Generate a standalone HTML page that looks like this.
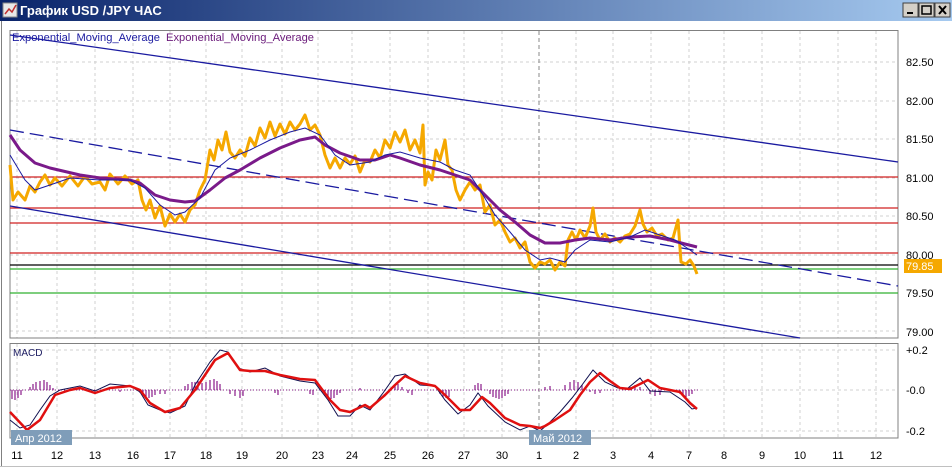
<!DOCTYPE html>
<html><head><meta charset="utf-8"><style>
body{margin:0;width:952px;height:470px;overflow:hidden;background:#fff;font-family:"Liberation Sans","DejaVu Sans",sans-serif;}
</style></head><body>
<svg width="952" height="470" xmlns="http://www.w3.org/2000/svg" style="position:absolute;left:0;top:0">
<defs>
<linearGradient id="tb" x1="0" x2="1" y1="0" y2="0"><stop offset="0" stop-color="#0a246a"/><stop offset="1" stop-color="#a6caf0"/></linearGradient>
</defs>
<rect x="0" y="0" width="952" height="21" fill="url(#tb)"/>
<rect x="3" y="3" width="14" height="14" fill="#e8e8e8" stroke="#888"/>
<path d="M5 14 L9 9 L12 12 L16 5" stroke="#c03030" fill="none" stroke-width="1.5"/>
<text x="20" y="15" fill="#fff" font-weight="bold" font-size="13" font-family="Liberation Sans, DejaVu Sans, sans-serif">График USD /JPY  ЧАС</text>
<g fill="#d4d0c8" stroke="#404040">
<rect x="903" y="3" width="15" height="14"/><rect x="919" y="3" width="15" height="14"/><rect x="935" y="3" width="15" height="14"/>
</g>
<rect x="907" y="12" width="6" height="2" fill="#000"/>
<rect x="922" y="6" width="9" height="8" fill="none" stroke="#000" stroke-width="1.5"/>
<path d="M939 6 L946 14 M946 6 L939 14" stroke="#000" stroke-width="2"/>
<line x1="1.5" y1="21" x2="1.5" y2="466" stroke="#808080"/>
<line x1="0" y1="466.5" x2="952" y2="466.5" stroke="#c0c0c0"/>
<!-- grid -->
<g stroke="#d0d0d0" stroke-dasharray="3,3">
<path d="M17 31V338M57 31V338M95 31V338M133 31V338M170 31V338M206 31V338M242 31V338M282 31V338M318 31V338M352 31V338M390 31V338M428 31V338M464 31V338M502 31V338M576 31V338M613 31V338M651 31V338M689 31V338M724 31V338M762 31V338M800 31V338M838 31V338M876 31V338"/>
<path d="M17 344V438M57 344V438M95 344V438M133 344V438M170 344V438M206 344V438M242 344V438M282 344V438M318 344V438M352 344V438M390 344V438M428 344V438M464 344V438M502 344V438M576 344V438M613 344V438M651 344V438M689 344V438M724 344V438M762 344V438M800 344V438M838 344V438M876 344V438"/>
<path d="M10 62H898M10 101H898M10 139H898M10 178H898M10 216H898M10 255H898M10 293H898M10 331H898"/>
<path d="M10 350H898M10 390H898M10 431H898"/>
</g>
<line x1="539" y1="31" x2="539" y2="438" stroke="#888" stroke-dasharray="4,3"/>
<rect x="10" y="30.5" width="888" height="307.5" fill="none" stroke="#808080"/>
<rect x="10" y="343.5" width="888" height="94.5" fill="none" stroke="#808080"/>
<!-- horizontal levels -->
<g stroke-width="1.2">
<line x1="10" y1="177" x2="898" y2="177" stroke="#d02020"/>
<line x1="10" y1="208" x2="898" y2="208" stroke="#d02020"/>
<line x1="10" y1="223" x2="898" y2="223" stroke="#d02020"/>
<line x1="10" y1="253" x2="898" y2="253" stroke="#d02020"/>
<line x1="10" y1="265" x2="898" y2="265" stroke="#000"/>
<line x1="10" y1="269" x2="898" y2="269" stroke="#30b030"/>
<line x1="10" y1="293" x2="898" y2="293" stroke="#30b030"/>
</g>
<!-- channel -->
<line x1="10" y1="35" x2="898" y2="162" stroke="#1a1aa0" stroke-width="1.3"/>
<line x1="10" y1="206" x2="800" y2="338" stroke="#1a1aa0" stroke-width="1.3"/>
<line x1="10" y1="130" x2="898" y2="286" stroke="#1a1aa0" stroke-width="1.3" stroke-dasharray="14,6"/>
<!-- price -->
<polyline fill="none" stroke="#f5a800" stroke-width="3" stroke-linejoin="round" points="10,165 13,200 18,192 25,200 30,186 35,192 40,182 45,175 50,185 55,178 62,186 70,176 78,186 85,176 92,184 100,182 105,190 110,174 118,184 125,176 132,184 138,180 142,200 146,210 150,200 155,218 160,206 165,226 170,214 175,222 180,214 185,222 190,210 195,205 200,190 205,180 210,150 214,160 218,140 222,150 226,132 230,152 235,158 240,150 245,156 250,138 255,146 260,128 265,138 270,122 275,136 280,124 285,134 290,122 295,130 300,124 305,115 310,130 315,125 320,135 325,155 330,168 335,158 340,168 345,158 350,164 355,156 360,172 365,160 370,162 375,150 380,158 385,140 390,148 395,132 400,142 405,130 410,150 415,140 420,153 423,125 425,185 428,172 432,180 436,150 440,160 445,140 448,165 452,170 456,190 460,200 465,190 470,182 475,190 480,185 485,212 490,205 495,225 500,220 505,232 510,242 515,238 520,248 525,242 530,262 535,268 540,262 545,264 550,260 555,270 560,262 565,266 568,240 572,232 576,240 580,230 585,238 590,226 593,208 596,232 600,240 605,234 610,242 615,238 620,242 625,236 630,234 635,226 640,210 643,224 647,232 652,228 657,236 662,234 668,240 673,238 678,220 681,262 686,264 690,260 694,266 697,274"/>
<polyline fill="none" stroke="#7a1a8a" stroke-width="3" stroke-linejoin="round" points="10,135 20,150 35,163 50,168 80,175 100,178 130,180 140,183 155,195 170,200 185,202 195,201 210,190 225,178 240,170 260,158 280,148 300,140 315,137 325,145 340,153 360,160 375,160 390,155 400,158 420,165 440,170 455,175 470,180 485,195 500,210 515,222 530,235 545,243 560,243 575,240 590,238 610,240 630,237 650,236 670,240 685,244 697,247"/>
<polyline fill="none" stroke="#1a1aa0" stroke-width="1" points="10,155 25,180 35,190 50,185 70,178 100,180 130,180 145,188 160,205 175,215 185,212 200,198 215,170 230,158 250,150 270,140 290,132 305,128 320,135 335,155 350,165 370,162 385,155 400,152 420,158 440,162 455,170 470,175 480,190 495,215 510,232 525,250 540,260 550,258 565,262 575,250 590,240 610,242 630,237 645,230 660,235 675,240 690,250 697,255"/>
<text x="12" y="41" font-size="11" fill="#1a1aa0" textLength="148" lengthAdjust="spacingAndGlyphs">Exponential_Moving_Average</text>
<text x="166" y="41" font-size="11" fill="#6a1a7a" textLength="148" lengthAdjust="spacingAndGlyphs">Exponential_Moving_Average</text>
<!-- price axis -->
<g font-size="11" fill="#000">
<text x="906" y="66">82.50</text><text x="906" y="105">82.00</text><text x="906" y="143">81.50</text><text x="906" y="182">81.00</text><text x="906" y="220">80.50</text><text x="906" y="259">80.00</text><text x="906" y="297">79.50</text><text x="906" y="336">79.00</text>
<text x="906" y="354">+0.2</text><text x="906" y="394">-0.0</text><text x="906" y="435">-0.2</text>
</g>
<rect x="904" y="259" width="38" height="14" fill="#f5a800"/>
<text x="906" y="270" font-size="11" fill="#fff">79.85</text>
<!-- MACD -->
<text x="13" y="356" font-size="10" fill="#1a1a60">MACD</text>
<line x1="10" y1="390" x2="700" y2="390" stroke="#8a1a8a" stroke-dasharray="1,2"/>
<path stroke="#8a1a8a" stroke-width="1.2" d="M12 390v9M15 390v10M18 390v8M21 390v5M30 390v-3M33 390v-6M36 390v-8M40 390v-9M44 390v-10M47 390v-8M50 390v-5M53 390v-2M120 390v2M140 390v3M143 390v5M146 390v7M149 390v8M152 390v7M155 390v5M160 390v4M165 390v4M185 390v-4M188 390v-6M192 390v-8M195 390v-8M198 390v-9M202 390v-7M206 390v-8M210 390v-10M214 390v-11M217 390v-9M220 390v-6M230 390v4M235 390v6M240 390v8M243 390v6M275 390v3M278 390v5M310 390v4M313 390v5M325 390v6M328 390v8M331 390v9M334 390v8M337 390v5M340 390v3M360 390v-2M395 390v-4M398 390v-6M402 390v-3M408 390v3M412 390v5M440 390v4M443 390v7M446 390v8M449 390v7M475 390v-5M478 390v-7M481 390v-6M490 390v4M493 390v7M496 390v8M499 390v9M502 390v8M505 390v6M508 390v4M545 390v-3M550 390v-4M565 390v-5M570 390v-8M574 390v-10M578 390v-8M582 390v-5M590 390v2M595 390v4M600 390v3M630 390v-3M635 390v-5M640 390v-3M650 390v4M655 390v6M660 390v5M680 390v4M683 390v6M686 390v7M689 390v6M692 390v4"/>
<polyline fill="none" stroke="#101050" stroke-width="1" points="10,420 20,428 30,425 40,410 50,396 60,390 80,386 95,391 110,384 130,386 140,392 148,405 160,410 170,413 185,406 195,385 210,362 220,350 228,352 238,368 250,372 265,368 280,376 300,381 315,383 328,400 338,416 350,416 360,405 370,410 383,393 395,376 405,374 420,385 435,386 445,400 458,414 470,405 478,393 488,406 505,422 520,430 530,426 540,431 548,424 560,412 572,398 582,385 593,370 605,382 618,388 628,388 640,378 650,391 670,392 685,402 692,409 697,408"/>
<polyline fill="none" stroke="#e01010" stroke-width="2.5" stroke-linejoin="round" points="10,412 27,430 40,420 55,395 70,390 80,388 95,393 110,388 130,386 140,390 150,403 165,412 180,408 195,390 215,360 228,353 240,370 250,371 265,371 280,375 300,379 315,380 330,400 340,410 350,412 365,405 370,408 385,395 395,385 405,376 420,383 435,386 445,395 460,410 470,410 482,397 490,403 505,418 520,425 530,426 540,428 545,426 555,420 570,410 580,395 590,382 600,373 610,381 620,388 630,389 648,380 660,388 680,392 690,403 697,409"/>
<!-- date labels -->
<rect x="11" y="430" width="61" height="15" fill="#7f9db9"/>
<text x="15" y="442" font-size="11" fill="#fff">Апр 2012</text>
<rect x="529" y="430" width="62" height="15" fill="#7f9db9"/>
<text x="533" y="442" font-size="11" fill="#fff">Май 2012</text>
<g font-size="11" fill="#000" text-anchor="middle">
<text x="17" y="459">11</text><text x="57" y="459">12</text><text x="95" y="459">13</text><text x="133" y="459">16</text><text x="170" y="459">17</text><text x="206" y="459">18</text><text x="242" y="459">19</text><text x="282" y="459">20</text><text x="318" y="459">23</text><text x="352" y="459">24</text><text x="390" y="459">25</text><text x="428" y="459">26</text><text x="464" y="459">27</text><text x="502" y="459">30</text><text x="539" y="459">1</text><text x="576" y="459">2</text><text x="613" y="459">3</text><text x="651" y="459">4</text><text x="689" y="459">7</text><text x="724" y="459">8</text><text x="762" y="459">9</text><text x="800" y="459">10</text><text x="838" y="459">11</text><text x="876" y="459">12</text>
</g>
</svg>
</body></html>
